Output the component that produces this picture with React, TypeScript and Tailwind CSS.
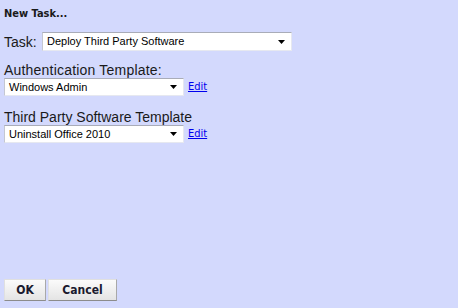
import React from "react";

const COND = '"DejaVu Sans Condensed", "DejaVu Sans", Tahoma, sans-serif';
const LBL = '"Liberation Sans", Arial, sans-serif';

function Select({ text, className }: { text: string; className: string }) {
  return (
    <div
      className={`relative flex items-center bg-white border border-t-[#a9acb8] border-l-[#c4c7d2] border-r-[#e6e8f0] border-b-[#e6e8f0] ${className}`}
    >
      <span className="pl-[4px] text-[11px] leading-none text-black" style={{ fontFamily: LBL }}>
        {text}
      </span>
      <svg className="absolute right-[6px] top-1/2 -translate-y-1/2" width="7" height="4" viewBox="0 0 7 4">
        <polygon points="0,0 7,0 3.5,4" fill="#000" />
      </svg>
    </div>
  );
}

function Btn({ label, className }: { label: string; className: string }) {
  return (
    <div
      className={`flex items-center justify-center h-[22px] bg-gradient-to-b from-[#fbfbfb] to-[#e4e4e4] border border-t-[#e0e0e0] border-l-[#e0e0e0] border-r-[#a8a8a8] border-b-[#8c8c8c] text-[12px] font-bold text-[#1a1a2e] ${className}`}
      style={{ fontFamily: COND }}
    >
      {label}
    </div>
  );
}

export default function App() {
  return (
    <div
      className="w-[458px] h-[308px] bg-[#d3d9fd] flex flex-col pl-[4px] pt-[7px] text-[#1a1a1a]"
      style={{ fontFamily: COND }}
    >
      <div className="text-[11px] font-bold leading-[13px] h-[13px]">New Task...</div>
      <div className="flex items-center mt-[12px] h-[19px]">
        <span className="text-[14px] leading-none w-[38px]" style={{ fontFamily: LBL }}>Task:</span>
        <Select text="Deploy Third Party Software" className="w-[250px] h-[19px]" />
      </div>
      <div className="mt-[11px] text-[14px] leading-[16px] tracking-[0.2px]" style={{ fontFamily: LBL }}>Authentication Template:</div>
      <div className="flex items-center">
        <Select text="Windows Admin" className="w-[180px] h-[18px]" />
        <a className="ml-[4px] text-[11px] underline text-[#0000ee]" style={{ fontFamily: COND }}>Edit</a>
      </div>
      <div className="mt-[13px] text-[14px] leading-[16px]" style={{ fontFamily: LBL }}>Third Party Software Template</div>
      <div className="flex items-center">
        <Select text="Uninstall Office 2010" className="w-[180px] h-[18px]" />
        <a className="ml-[4px] text-[11px] underline text-[#0000ee]" style={{ fontFamily: COND }}>Edit</a>
      </div>
      <div className="flex-1" />
      <div className="flex gap-[2px] mb-[7px]">
        <Btn label="OK" className="w-[42px]" />
        <Btn label="Cancel" className="w-[69px]" />
      </div>
    </div>
  );
}
